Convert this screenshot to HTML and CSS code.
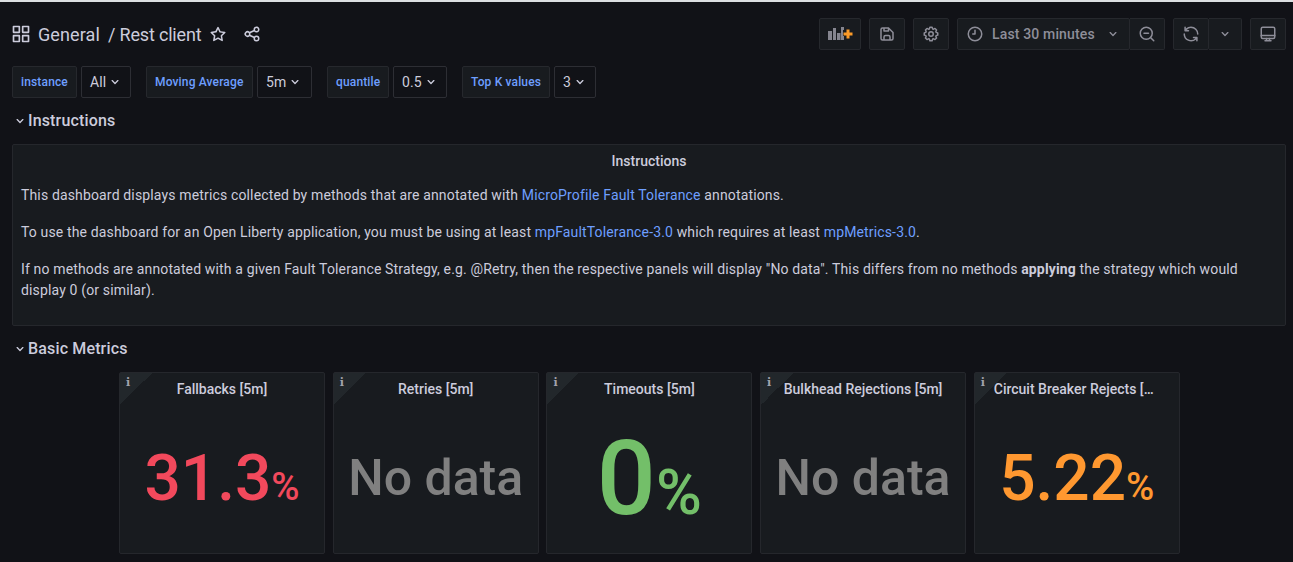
FILE: index.html
```html
<!DOCTYPE html>
<html lang="en">
<head>
<meta charset="utf-8">
<title>Rest client</title>
<link rel="stylesheet" href="styles.css">
</head>
<body>
<svg class="defs" aria-hidden="true">
  <symbol id="down" viewBox="0 0 24 24"><path d="M17,9.17a1,1,0,0,0-1.41,0L12,12.71,8.46,9.17a1,1,0,0,0-1.41,0,1,1,0,0,0,0,1.42l4.24,4.24a1,1,0,0,0,1.42,0L17,10.59A1,1,0,0,0,17,9.17Z"/></symbol>
</svg>
<header class="toolbar">
  <div class="crumbs">
    <svg class="icon apps" viewBox="0 0 24 24"><path fill-rule="evenodd" d="M3,2H10a1,1,0,0,1,1,1V10a1,1,0,0,1-1,1H3a1,1,0,0,1-1-1V3A1,1,0,0,1,3,2ZM4,4V9H9V4ZM14,2H21a1,1,0,0,1,1,1V10a1,1,0,0,1-1,1H14a1,1,0,0,1-1-1V3A1,1,0,0,1,14,2ZM15,4V9H20V4ZM3,13H10a1,1,0,0,1,1,1V21a1,1,0,0,1-1,1H3a1,1,0,0,1-1-1V14A1,1,0,0,1,3,13ZM4,15V20H9V15ZM14,13H21a1,1,0,0,1,1,1V21a1,1,0,0,1-1,1H14a1,1,0,0,1-1-1V14A1,1,0,0,1,14,13ZM15,15V20H20V15Z"/></svg>
    <span class="folder">General</span><span class="page">/ Rest client</span>
    <svg class="icon star" viewBox="0 0 24 24"><path d="M22,9.67A1,1,0,0,0,21.14,9l-5.69-.83L12.9,3a1,1,0,0,0-1.8,0L8.55,8.16,2.86,9a1,1,0,0,0-.81.68,1,1,0,0,0,.25,1l4.13,4-1,5.68A1,1,0,0,0,6.9,21.44L12,18.77l5.1,2.67a.93.93,0,0,0,.46.12,1,1,0,0,0,.59-.19,1,1,0,0,0,.4-1l-1-5.68,4.13-4A1,1,0,0,0,22,9.67Zm-6.15,4a1,1,0,0,0-.29.88l.72,4.2-3.76-2a1.06,1.06,0,0,0-.94,0l-3.76,2,.72-4.2a1,1,0,0,0-.29-.88l-3-3,4.21-.61a1,1,0,0,0,.76-.55L12,5.7l1.88,3.82a1,1,0,0,0,.76.55l4.21.61Z"/></svg>
    <svg class="icon share" viewBox="0 0 24 24"><path d="M18,14a4,4,0,0,0-3.08,1.48l-5.1-2.35a3.64,3.64,0,0,0,0-2.26l5.1-2.35A4,4,0,1,0,14,6a4.17,4.17,0,0,0,.07.71L8.79,9.14a4,4,0,1,0,0,5.72l5.28,2.43A4.17,4.17,0,0,0,14,18a4,4,0,1,0,4-4ZM18,4a2,2,0,1,1-2,2A2,2,0,0,1,18,4ZM6,14a2,2,0,1,1,2-2A2,2,0,0,1,6,14Zm12,6a2,2,0,1,1,2-2A2,2,0,0,1,18,20Z"/></svg>
  </div>
  <div class="actions">
    <div class="btn add"><svg class="addicon" viewBox="0 0 25 16"><path class="bars" d="M0 5h4v9H0zM5 2h3v12H5zM9 7h3.500v7H9zM13 1h3v3h-1v6h1v4h-3z"/><path class="plus" d="M18.500 3.500h3v3h3v3h-3v3h-3v-3h-3v-3h3z"/></svg></div>
    <div class="btn sq"><svg class="icon" viewBox="0 0 24 24"><path d="M20.71,9.29l-6-6a1,1,0,0,0-.32-.21A1.09,1.09,0,0,0,14,3H6A3,3,0,0,0,3,6V18a3,3,0,0,0,3,3H18a3,3,0,0,0,3-3V10A1,1,0,0,0,20.71,9.29ZM9,5h4V7H9Zm6,14H9V16a1,1,0,0,1,1-1h4a1,1,0,0,1,1,1Zm4-1a1,1,0,0,1-1,1H17V16a3,3,0,0,0-3-3H10a3,3,0,0,0-3,3v3H6a1,1,0,0,1-1-1V6A1,1,0,0,1,6,5H7V8A1,1,0,0,0,8,9h6a1,1,0,0,0,1-1V6.41l4,4Z"/></svg></div>
    <div class="btn sq"><svg class="icon" viewBox="0 0 24 24"><path d="M21.32,9.55l-1.89-.63.89-1.78A1,1,0,0,0,20.13,6L18,3.87a1,1,0,0,0-1.15-.19l-1.78.89-.63-1.89A1,1,0,0,0,13.5,2h-3a1,1,0,0,0-.95.68L8.92,4.57,7.14,3.68A1,1,0,0,0,6,3.87L3.87,6a1,1,0,0,0-.19,1.15l.89,1.78-1.89.63A1,1,0,0,0,2,10.5v3a1,1,0,0,0,.68.95l1.89.63-.89,1.78A1,1,0,0,0,3.87,18L6,20.13a1,1,0,0,0,1.15.19l1.78-.89.63,1.89a1,1,0,0,0,.95.68h3a1,1,0,0,0,.95-.68l.63-1.89,1.78.89A1,1,0,0,0,18,20.13L20.13,18a1,1,0,0,0,.19-1.15l-.89-1.78,1.89-.63A1,1,0,0,0,22,13.5v-3A1,1,0,0,0,21.32,9.55ZM20,12.78l-1.2.4A2,2,0,0,0,17.64,16l.57,1.14-1.1,1.1L16,17.64a2,2,0,0,0-2.79,1.16l-.4,1.2H11.22l-.4-1.2A2,2,0,0,0,8,17.64l-1.14.57-1.1-1.1L6.36,16A2,2,0,0,0,5.2,13.18L4,12.78V11.22l1.2-.4A2,2,0,0,0,6.36,8L5.79,6.89l1.1-1.1L8,6.36A2,2,0,0,0,10.82,5.2l.4-1.2h1.56l.4,1.2A2,2,0,0,0,16,6.36l1.14-.57,1.1,1.1L17.64,8a2,2,0,0,0,1.16,2.79l1.2.4ZM12,8a4,4,0,1,0,4,4A4,4,0,0,0,12,8Zm0,6a2,2,0,1,1,2-2A2,2,0,0,1,12,14Z"/></svg></div>
    <div class="group">
      <div class="btn time"><svg class="icon line" viewBox="0 0 24 24"><circle cx="12" cy="12" r="9"/><path d="M12 7v5H9"/></svg><span>Last 30 minutes</span><svg class="icon chev"><use href="#down"/></svg></div>
      <div class="btn sq"><svg class="icon line" viewBox="0 0 24 24"><circle cx="11" cy="11" r="8"/><path d="M8 11h6M17 17l4 4"/></svg></div>
    </div>
    <div class="group">
      <div class="btn sq"><svg class="icon" viewBox="0 0 24 24"><path d="M19.91,15.51H15.38a1,1,0,0,0,0,2h2.4A8,8,0,0,1,4,12a1,1,0,0,0-2,0,10,10,0,0,0,16.88,7.23V21a1,1,0,0,0,2,0V16.5A1,1,0,0,0,19.91,15.51ZM12,2A10,10,0,0,0,5.12,4.77V3a1,1,0,0,0-2,0V7.5a1,1,0,0,0,1,1h4.5a1,1,0,0,0,0-2H6.22A8,8,0,0,1,20,12a1,1,0,0,0,2,0A10,10,0,0,0,12,2Z"/></svg></div>
      <div class="btn interval"><svg class="icon chev"><use href="#down"/></svg></div>
    </div>
    <div class="btn sq"><svg class="icon line" viewBox="0 0 24 24"><rect x="3" y="3" width="18" height="15" rx="2"/><path d="M3 14h18M10 18v3M14 18v3M8 21h8"/></svg></div>
  </div>
</header>
<section class="vars">
  <div class="var v1"><span class="name">instance</span><span class="value">All<svg class="icon mini"><use href="#down"/></svg></span></div>
  <div class="var v2"><span class="name">Moving Average</span><span class="value">5m<svg class="icon mini"><use href="#down"/></svg></span></div>
  <div class="var v3"><span class="name">quantile</span><span class="value">0.5<svg class="icon mini"><use href="#down"/></svg></span></div>
  <div class="var v4"><span class="name">Top K values</span><span class="value">3<svg class="icon mini"><use href="#down"/></svg></span></div>
</section>
<h2 class="row"><svg class="icon mini"><use href="#down"/></svg>Instructions</h2>
<section class="panel notes">
  <h3>Instructions</h3>
  <p>This dashboard displays metrics collected by methods that are annotated with <a>MicroProfile Fault Tolerance</a> annotations.</p>
  <p>To use the dashboard for an Open Liberty application, you must be using at least <a>mpFaultTolerance-3.0</a> which requires at least <a>mpMetrics-3.0</a>.</p>
  <p>If no methods are annotated with a given Fault Tolerance Strategy, e.g. @Retry, then the respective panels will display "No data". This differs from no methods <strong>applying</strong> the strategy which would display 0 (or similar).</p>
</section>
<h2 class="row"><svg class="icon mini"><use href="#down"/></svg>Basic Metrics</h2>
<section class="stats">
  <article class="panel stat"><span class="info">i</span><h3>Fallbacks [5m]</h3><div class="num red">31.3<small>%</small></div></article>
  <article class="panel stat"><span class="info">i</span><h3>Retries [5m]</h3><div class="num none">No data</div></article>
  <article class="panel stat"><span class="info">i</span><h3>Timeouts [5m]</h3><div class="num green">0<small>%</small></div></article>
  <article class="panel stat"><span class="info">i</span><h3>Bulkhead Rejections [5m]</h3><div class="num none">No data</div></article>
  <article class="panel stat"><span class="info">i</span><h3>Circuit Breaker Rejects [5m]</h3><div class="num orange">5.22<small>%</small></div></article>
</section>
</body>
</html>
```

FILE: styles.css
```css
* { box-sizing: border-box; }
body {
  margin: 0;
  height: 562px;
  overflow: hidden;
  padding: 16px 7px 0 12px;
  border-top: 2px solid #dcdfe1;
  background: #111217;
  color: #ccccdc;
  font: 14px/22px Roboto, "Liberation Sans", sans-serif;
  letter-spacing: 0.01071em;
}
.defs { position: absolute; width: 0; height: 0; }
h2, h3, p { margin: 0; font-weight: 500; }
.icon { width: 18px; height: 18px; fill: currentColor; flex: none; display: block; }
.line { fill: none; stroke: currentColor; stroke-width: 2; stroke-linecap: round; stroke-linejoin: round; }
.toolbar { display: flex; justify-content: space-between; height: 32px; }
.crumbs { display: flex; align-items: center; height: 32px; font-size: 18px; letter-spacing: 0; white-space: nowrap; }
.crumbs span { padding-top: 1px; }
.apps { width: 20px; height: 20px; margin: 0 7px 0 -1px; }
.folder { letter-spacing: 0.1px; }
.page { margin-left: 8px; letter-spacing: -0.17px; }
.star { margin-left: 8px; }
.share { margin-left: 16px; }
.actions { display: flex; gap: 8px; color: #8e8e99; }
.group { display: flex; }
.btn {
  display: flex;
  align-items: center;
  justify-content: center;
  height: 32px;
  background: #181b1f;
  border: 1px solid #26282d;
  border-radius: 2px;
}
.group .btn + .btn { border-left: 0; border-radius: 0 2px 2px 0; }
.sq { width: 36px; }
.add { width: 42px; }
.addicon { width: 25px; height: 16px; }
.bars { fill: #85858f; }
.plus { fill: #fa9a28; }
.time { width: 173px; padding: 0 8px; justify-content: flex-start; font-weight: 500; white-space: nowrap; }
.time span { margin-left: 8px; }
.time .chev { margin-left: auto; }
.group .time + .sq { width: 35px; }
.chev { width: 16px; height: 16px; }
.interval { width: 33px; }
.vars { display: flex; gap: 15px; margin-top: 16px; }
.var { display: flex; gap: 4px; }
.name, .value {
  display: flex;
  align-items: center;
  height: 32px;
  border: 1px solid #26282d;
  border-radius: 2px;
  padding-left: 8px;
  white-space: nowrap;
}
.name { background: #181b1f; color: #6e9fff; font-size: 12px; font-weight: 500; }
.value { border-color: #2d2e34; gap: 1px; }
.v1 .name { width: 65px; } .v1 .value { width: 50px; }
.v2 .name { width: 107px; } .v2 .value { width: 55px; }
.v3 .name { width: 62px; } .v3 .value { width: 54px; }
.v4 .name { width: 88px; } .v4 .value { width: 42px; }
.mini { width: 16px; height: 16px; }
.row { display: flex; align-items: center; height: 46px; font-size: 16px; }
.panel { background: #181b1f; border: 1px solid #25272c; border-radius: 2px; }
h3 { font-size: 14px; text-align: center; letter-spacing: 0; }
.notes { height: 182px; padding: 5px 8px 0; }
.notes h3 { margin-bottom: 13px; }
.notes p { font-weight: 400; line-height: 21px; margin-bottom: 16px; }
.notes a { color: #6e9fff; }
.stats { display: grid; grid-template-columns: repeat(5, 206px); column-gap: 7.7px; margin-left: 107px; }
.stat { position: relative; height: 182px; padding-top: 5px; }
.stat h3 { padding: 0 19px; overflow: hidden; text-overflow: ellipsis; white-space: nowrap; }
.info {
  position: absolute;
  top: 0;
  left: 0;
  width: 32px;
  height: 32px;
  padding-left: 6px;
  background: linear-gradient(135deg, #22272b 50%, transparent 50%);
  color: #a2a3ad;
  font: bold 11px/19px "DejaVu Serif", serif;
}
.num { display: flex; align-items: baseline; justify-content: center; height: 150px; margin-top: 4px; line-height: 150px; font-weight: 500; letter-spacing: 0; white-space: nowrap; }
.num small { font-size: 0.6em; }
.red, .orange { font-size: 64px; }
.red { color: #f2495c; }
.orange { color: #ff9830; }
.green { font-size: 104px; color: #73bf69; }
.none { font-size: 50px; margin-top: 3px; color: #808080; }
```
